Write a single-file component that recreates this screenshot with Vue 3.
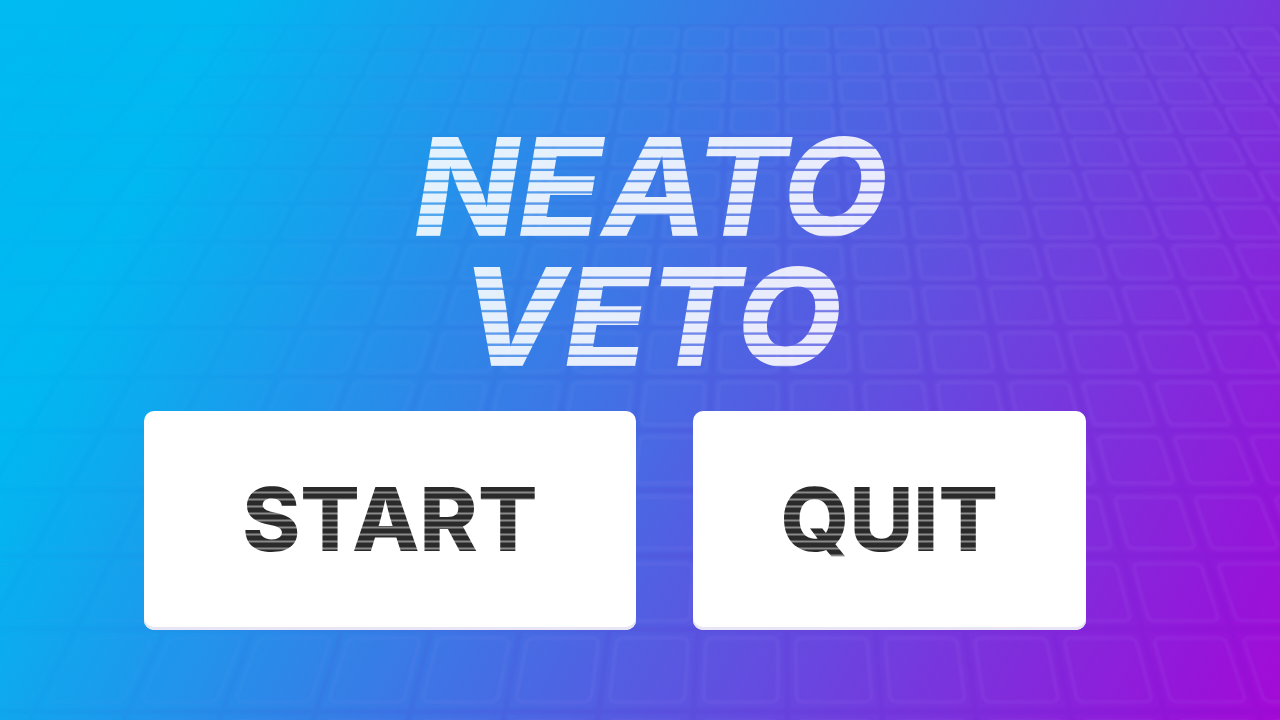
<script setup>
const horizon = -730
const vanishX = 775
const rowY = (n) => horizon + 23842 / (31.54 - n)
const colX = (j, y) => vanishX + (0.00857 + 0.06536 * j) * (y - horizon)
const mix = (a, b, t) => [a[0] + (b[0] - a[0]) * t, a[1] + (b[1] - a[1]) * t]
const pt = (p) => p[0].toFixed(1) + ' ' + p[1].toFixed(1)

// Rounded floor tile between four projected grid lines
function tile(j, n) {
  const top = rowY(n + 0.11)
  const bottom = rowY(n + 0.89)
  const c = [
    [colX(j + 0.1, top), top],
    [colX(j + 0.9, top), top],
    [colX(j + 0.9, bottom), bottom],
    [colX(j + 0.1, bottom), bottom],
  ]
  let d = ''
  for (let i = 0; i < 4; i++) {
    const before = mix(c[i], c[(i + 3) % 4], 0.1)
    const after = mix(c[i], c[(i + 1) % 4], 0.1)
    d += (i ? 'L' : 'M') + pt(before) + 'Q' + pt(c[i]) + ' ' + pt(after)
  }
  return d + 'Z'
}

let tiles = ''
let seams = ''
for (let n = 0; n < 16; n++) {
  for (let j = -16; j < 12; j++) tiles += tile(j, n)
  seams += `M0 ${rowY(n).toFixed(1)}H1280`
}
for (let j = -16; j < 13; j++) {
  seams += `M${colX(j, 24).toFixed(1)} 24L${colX(j, 740).toFixed(1)} 740`
}
const titleLines = ['NEATO', 'VETO']
const actions = ['START', 'QUIT']
</script>

<template>
  <main class="screen">
    <svg class="floor" viewBox="0 0 1280 720" preserveAspectRatio="none" aria-hidden="true">
      <defs>
        <filter id="soft" x="0" y="0" width="1" height="1"><feGaussianBlur stdDeviation="1" /></filter>
        <linearGradient id="fade" x1="0" y1="0" x2="1" y2="0.3">
          <stop offset="0" stop-color="#111" />
          <stop offset="0.3" stop-color="#555" />
          <stop offset="0.65" stop-color="#fff" />
        </linearGradient>
        <mask id="reveal" maskUnits="userSpaceOnUse" x="0" y="0" width="1280" height="720">
          <rect width="1280" height="720" fill="url(#fade)" />
        </mask>
      </defs>
      <g mask="url(#reveal)">
        <g filter="url(#soft)">
          <path :d="seams" class="seams" />
          <path :d="tiles" class="tiles" />
        </g>
      </g>
    </svg>
    <h1 class="title">
      <span v-for="line in titleLines" :key="line" class="title-line">{{ line }}</span>
    </h1>
    <nav class="actions">
      <button v-for="label in actions" :key="label" type="button" class="action">
        <span class="label">{{ label }}</span>
      </button>
    </nav>
  </main>
</template>

<style>
body {
  margin: 0;
}
</style>

<style scoped>
.screen {
  position: relative;
  box-sizing: border-box;
  min-height: 100vh;
  padding: 122px 194px 90px 144px;
  overflow: hidden;
  background: linear-gradient(117deg, #00baf2 0%, #00b8f1 14%, #4b67e3 54%, #9714d9 94%, #a40ad5 100%);
  font-family: Inter, "Liberation Sans", sans-serif;
}
.floor {
  position: absolute;
  inset: 0;
  width: 100%;
  height: 100%;
}
.tiles {
  fill: none;
  stroke: rgba(190, 170, 255, 0.07);
  stroke-width: 4;
}
.seams {
  fill: none;
  stroke: rgba(80, 0, 180, 0.06);
  stroke-width: 5;
}
.title {
  position: relative;
  margin: 0 0 29px 72px;
  font-size: 136px;
  line-height: 130px;
  font-weight: 800;
  font-style: italic;
  text-align: center;
}
.title-line {
  display: block;
  color: transparent;
  background-image: repeating-linear-gradient(
    to bottom,
    rgba(255, 255, 255, 0.88) 0 6%,
    rgba(255, 255, 255, 0.2) 7% 8%,
    rgba(255, 255, 255, 0.88) 8.6%
  );
  background-position: 0 16px;
  -webkit-background-clip: text;
  background-clip: text;
}
.actions {
  position: relative;
  display: grid;
  grid-template-columns: 5fr 4fr;
  gap: 57px;
}
.action {
  height: 219px;
  padding: 0 0 4px;
  border: 0;
  border-radius: 10px;
  background: #fff;
  box-shadow: inset 0 -3px 0 #e8e6f4;
  font: inherit;
  font-size: 88px;
  line-height: 112px;
  font-weight: 800;
  cursor: pointer;
}
.label {
  display: block;
  color: transparent;
  background-image: repeating-linear-gradient(to bottom, #2a2a2a 0 4px, #8a8a8a 5px 6px, #2a2a2a 7px);
  background-position: 0 24px;
  -webkit-background-clip: text;
  background-clip: text;
}
</style>
